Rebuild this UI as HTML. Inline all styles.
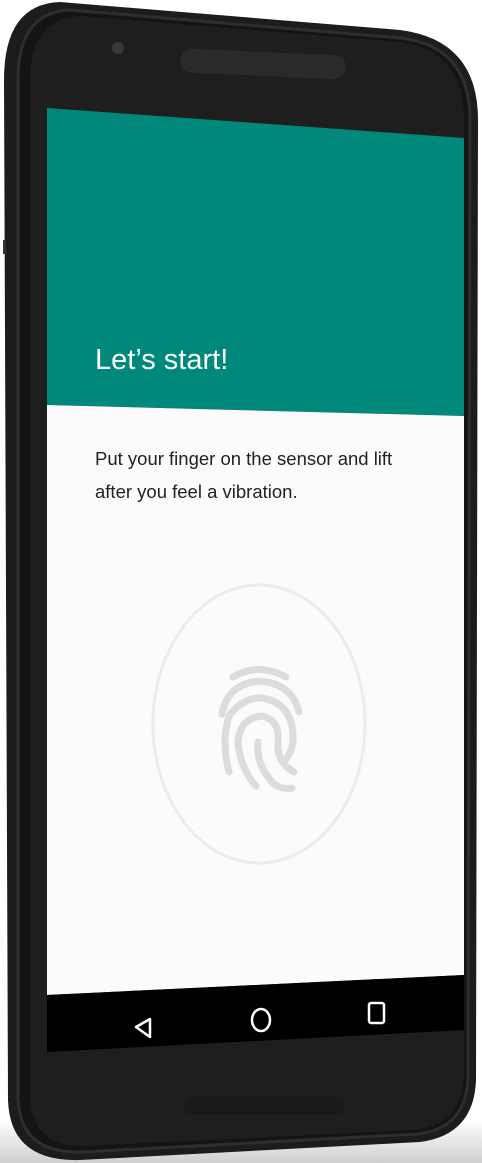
<!DOCTYPE html>
<html><head><style>
html,body{margin:0;padding:0;background:#fff;width:482px;height:1163px;overflow:hidden}
svg{display:block}
text{font-family:"Liberation Sans",sans-serif}
</style></head><body>
<svg width="482" height="1163" viewBox="0 0 482 1163">
<defs>
<linearGradient id="sh" x1="0" y1="0" x2="0" y2="1"><stop offset="0" stop-color="#fff"/><stop offset="1" stop-color="#cfcfcf"/></linearGradient>
</defs>
<rect x="0" y="1120" width="482" height="43" fill="url(#sh)"/>
<!-- body -->
<path d="M60,2 L400,30 Q478,40 478,120 L476,1080 Q474,1135 420,1142 L80,1160 Q10,1162 8,1100 L4,80 Q4,4 60,2 Z" fill="#1c1c1c"/>
<path d="M70,10 L400,38 Q470,46 470,120 L468,1078 Q466,1128 418,1134 L82,1152 Q20,1154 18,1098 L18,80 Q18,12 70,10 Z" fill="#141414" stroke="#2e2e2e" stroke-width="3"/>
<path d="M82,16 L400,42 Q464,50 464,120 L464,1076 Q462,1124 416,1130 L86,1146 Q32,1148 30,1096 L30,80 Q30,18 82,16 Z" fill="#1e1e1e"/>
<circle cx="118" cy="48" r="6" fill="#3a3a3a"/>
<rect x="180" y="52" width="166" height="24" rx="12" fill="#2a2a2a" transform="rotate(2.5 263 64)"/>
<rect x="183" y="1096" width="163" height="20" rx="10" fill="#1a1a1a" stroke="#222"/>
<rect x="3" y="240" width="3" height="14" fill="#333"/>
<!-- screen -->
<polygon points="47,108 464,138 464,416 47,405" fill="#00887a"/>
<polygon points="47,405 464,416 464,975 47,995" fill="#fcfafc"/>
<polygon points="47,995 464,975 464,1030 47,1052" fill="#000"/>
<text x="95" y="369" font-size="29" fill="#fff">Let’s start!</text>
<text x="95" y="465" font-size="18.5" fill="#222">Put your finger on the sensor and lift</text>
<text x="95" y="498" font-size="18.5" fill="#222">after you feel a vibration.</text>
<ellipse cx="259" cy="724" rx="106" ry="139" fill="none" stroke="#ececec" stroke-width="3"/>
<g fill="none" stroke="#dcdcdc" stroke-width="7" stroke-linecap="round">
<path d="M233,677 Q258,662 286,677"/>
<path d="M222,714 Q227,685 258,681 Q292,683 299,712"/>
<path d="M229,772 Q221,740 229,716 Q243,697 262,698 Q287,702 292,726 Q296,748 285,760"/>
<path d="M256,786 Q240,768 238,742 Q240,718 262,716 Q280,720 278,742 Q276,762 294,772"/>
<path d="M258,742 Q256,766 274,784 Q282,790 292,788"/>
</g>
<!-- nav -->
<path d="M150,1019 L136,1027 L150,1037 Z" fill="none" stroke="#fff" stroke-width="2.5" stroke-linejoin="round"/>
<ellipse cx="261" cy="1020" rx="9" ry="11" fill="none" stroke="#fff" stroke-width="2.5"/>
<rect x="369" y="1003" width="15" height="20" rx="2" fill="none" stroke="#fff" stroke-width="2.5"/>
</svg>
</body></html>
